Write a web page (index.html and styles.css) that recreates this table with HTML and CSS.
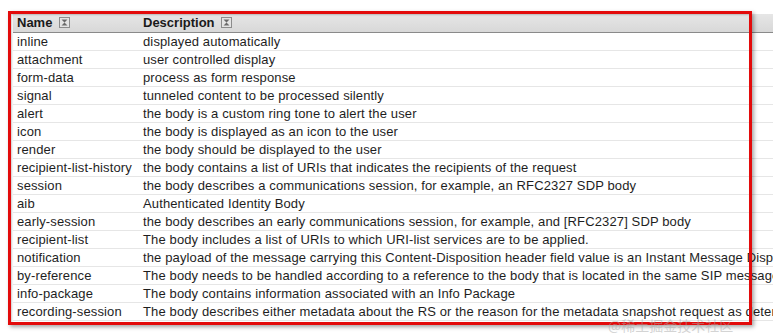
FILE: index.html
```html
<!DOCTYPE html>
<html>
<head>
<meta charset="utf-8">
<link rel="stylesheet" href="styles.css">
</head>
<body>
<div class="page">
  <div class="grid-wrap">
    <table class="grid">
      <colgroup><col class="c-name"><col class="c-desc"></colgroup>
      <thead>
        <tr>
          <th>Name <svg class="filter" width="11" height="11" viewBox="0 0 11 11"><rect x="0.5" y="0.5" width="10" height="10" fill="#e4e4e4" stroke="#8c8c8c"/><path d="M2.5 2.5 H8.5 L5.5 5.5 Z M2.5 8.5 H8.5 L5.5 5.5 Z" fill="#6a6a6a"/></svg></th>
          <th>Description <svg class="filter" width="11" height="11" viewBox="0 0 11 11"><rect x="0.5" y="0.5" width="10" height="10" fill="#e4e4e4" stroke="#8c8c8c"/><path d="M2.5 2.5 H8.5 L5.5 5.5 Z M2.5 8.5 H8.5 L5.5 5.5 Z" fill="#6a6a6a"/></svg></th>
        </tr>
      </thead>
      <tbody>
        <tr><td>inline</td><td>displayed automatically</td></tr>
        <tr><td>attachment</td><td>user controlled display</td></tr>
        <tr><td>form-data</td><td>process as form response</td></tr>
        <tr><td>signal</td><td>tunneled content to be processed silently</td></tr>
        <tr><td>alert</td><td>the body is a custom ring tone to alert the user</td></tr>
        <tr><td>icon</td><td>the body is displayed as an icon to the user</td></tr>
        <tr><td>render</td><td>the body should be displayed to the user</td></tr>
        <tr><td>recipient-list-history</td><td>the body contains a list of URIs that indicates the recipients of the request</td></tr>
        <tr><td>session</td><td>the body describes a communications session, for example, an RFC2327 SDP body</td></tr>
        <tr><td>aib</td><td>Authenticated Identity Body</td></tr>
        <tr><td>early-session</td><td>the body describes an early communications session, for example, and [RFC2327] SDP body</td></tr>
        <tr><td>recipient-list</td><td>The body includes a list of URIs to which URI-list services are to be applied.</td></tr>
        <tr><td>notification</td><td>the payload of the message carrying this Content-Disposition header field value is an Instant Message Disposition Notification as requested in the corresponding Instant Message.</td></tr>
        <tr><td>by-reference</td><td>The body needs to be handled according to a reference to the body that is located in the same SIP message as the body.</td></tr>
        <tr><td>info-package</td><td>The body contains information associated with an Info Package</td></tr>
        <tr><td>recording-session</td><td>The body describes either metadata about the RS or the reason for the metadata snapshot request as determined by the MIME value indicated in the Content-Type.</td></tr>
      </tbody>
    </table>
  </div>
  <div class="highlight"></div>
  <div class="watermark">@稀土掘金技术社区</div>
</div>
</body>
</html>
```
FILE: styles.css
```css
html, body {
  margin: 0;
  padding: 0;
  background: #ffffff;
}
.page {
  position: relative;
  width: 773px;
  height: 333px;
  overflow: hidden;
  font-family: "Liberation Sans", Arial, sans-serif;
}
.grid-wrap {
  padding: 14px 0 0 13px;
}
.grid {
  border-collapse: collapse;
  table-layout: fixed;
  width: 1326px;
  white-space: nowrap;
  font-size: 13px;
  letter-spacing: 0.13px;
  color: #1e1e1e;
}
.c-name {
  width: 126px;
}
.c-desc {
  width: 1200px;
}
.grid th,
.grid td {
  box-sizing: border-box;
  overflow: hidden;
  padding: 0 4px;
}
.grid th {
  text-align: left;
  font-weight: bold;
  letter-spacing: 0;
  height: 18px;
  line-height: 18px;
  background: linear-gradient(#e6e6e6, #d8d8d8);
  border-bottom: 1px solid #8a8a8a;
  color: #1a1a1a;
}
.grid td {
  height: 18px;
  line-height: 17px;
  border-bottom: 1px solid #e6e6e6;
}
.filter {
  vertical-align: -1px;
  margin-left: 3px;
}
.highlight {
  position: absolute;
  left: 8px;
  top: 11px;
  width: 738px;
  height: 308px;
  border: 3px solid #e30b0b;
  box-shadow: 2px 2px 4px rgba(0, 0, 0, 0.35), inset 1px 1px 2px rgba(0, 0, 0, 0.2);
}
.watermark {
  position: absolute;
  left: 608px;
  top: 315px;
  font-family: "Noto Sans CJK SC", sans-serif;
  font-size: 14px;
  color: rgba(170, 170, 170, 0.5);
}
```
